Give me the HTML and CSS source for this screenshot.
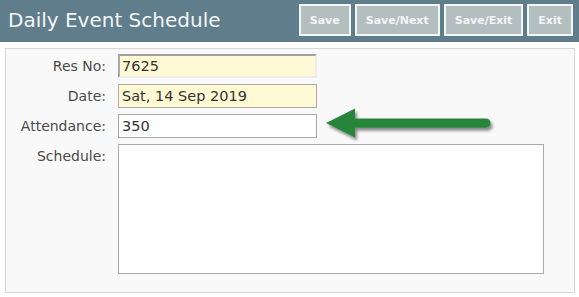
FILE: index.html
```html
<!DOCTYPE html>
<html>
<head>
<meta charset="utf-8">
<link rel="stylesheet" href="styles.css">
</head>
<body>
<div class="topbar">
  <h1 class="title">Daily Event Schedule</h1>
  <div class="actions">
    <button class="btn">Save</button>
    <button class="btn">Save/Next</button>
    <button class="btn">Save/Exit</button>
    <button class="btn">Exit</button>
  </div>
</div>
<div class="panel">
  <div class="form">
    <label class="lbl">Res No:</label>
    <div class="field readonly">7625</div>
    <label class="lbl">Date:</label>
    <div class="field dated">Sat, 14 Sep 2019</div>
    <label class="lbl">Attendance:</label>
    <div class="field plain">350</div>
    <label class="lbl lbl-top">Schedule:</label>
    <div class="area"></div>
  </div>
  <svg class="pointer" width="180" height="40" viewBox="0 0 180 40">
    <defs>
      <filter id="sh" x="-10%" y="-30%" width="130%" height="180%">
        <feGaussianBlur in="SourceAlpha" stdDeviation="1.6"/>
        <feOffset dx="1.5" dy="2.5" result="b"/>
        <feComponentTransfer><feFuncA type="linear" slope="0.45"/></feComponentTransfer>
        <feMerge><feMergeNode/><feMergeNode in="SourceGraphic"/></feMerge>
      </filter>
    </defs>
    <g filter="url(#sh)">
      <path d="M4 18 L33 3.5 L33 13.5 L164 13.5 A4.6 4.6 0 0 1 164 22.7 L33 22.7 L33 32.5 Z" fill="#28843a"/>
    </g>
  </svg>
</div>
</body>
</html>
```
FILE: styles.css
```css
html, body {
  margin: 0;
  padding: 0;
  background: #ffffff;
  font-family: "DejaVu Sans", Verdana, sans-serif;
}
.topbar {
  height: 42px;
  background: #5f7d8a;
  display: flex;
  align-items: flex-start;
  justify-content: space-between;
  box-sizing: border-box;
}
.title {
  margin: 0;
  padding: 7px 0 0 8px;
  font-size: 20px;
  font-weight: normal;
  color: #f3f6f7;
  line-height: 26px;
}
.actions {
  display: flex;
  gap: 4px;
  padding: 4px 6px 0 0;
}
.btn {
  height: 32px;
  padding: 0 9px;
  border: 2px solid #f4f6f6;
  background: #b3bfbf;
  color: #f4f6f6;
  font-family: "DejaVu Sans", Verdana, sans-serif;
  font-size: 11px;
  font-weight: bold;
  margin: 0;
}
.panel {
  position: relative;
  margin: 6px 4px 0 5px;
  height: 245px;
  box-sizing: border-box;
  border: 1px solid #d6d6d6;
  background: #f9f9f9;
  padding-top: 5px;
}
.form {
  display: grid;
  grid-template-columns: 100px auto;
  column-gap: 12px;
  row-gap: 6px;
  align-items: center;
  font-size: 14px;
}
.lbl {
  text-align: right;
  color: #4a4a4a;
}
.lbl-top {
  align-self: start;
  padding-top: 4px;
}
.field {
  width: 199px;
  height: 24px;
  box-sizing: border-box;
  line-height: 22px;
  padding-left: 3px;
  color: #333;
  font-size: 14.5px;
}
.readonly {
  background: #fff9d4;
  border-top: 2px solid #a0a0a0;
  border-left: 2px solid #a8a8a8;
  border-right: 2px solid #ececec;
  border-bottom: 2px solid #ececec;
  line-height: 20px;
  padding-left: 2px;
}
.dated {
  background: #fff9d4;
  border: 1px solid #aaaaaa;
}
.plain {
  background: #ffffff;
  border: 1px solid #a8a8a8;
}
.area {
  width: 426px;
  height: 130px;
  box-sizing: border-box;
  background: #ffffff;
  border: 1px solid #aaaaaa;
}
.pointer {
  position: absolute;
  left: 316px;
  top: 56px;
}
```
